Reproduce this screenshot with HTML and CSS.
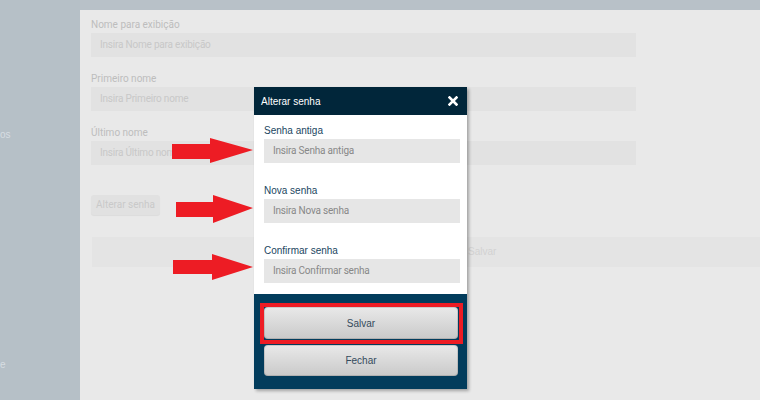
FILE: index.html
```html
<!DOCTYPE html>
<html>
<head>
    <meta charset="utf-8" />
    <title>Alterar senha</title>
    <link rel="stylesheet" href="styles.css">
</head>
<body>
    <div id="pagina">
        <div id="menu">
            <div class="menu-item item1">os</div>
            <div class="menu-item item2">e</div>
        </div>
        <div id="direita">
            <div id="topo"></div>
            <div id="conteudo">
                <div class="grupo">
                    <div class="rotulo">Nome para exibição</div>
                    <div class="campo">Insira Nome para exibição</div>
                </div>
                <div class="grupo">
                    <div class="rotulo">Primeiro nome</div>
                    <div class="campo">Insira Primeiro nome</div>
                </div>
                <div class="grupo">
                    <div class="rotulo">Último nome</div>
                    <div class="campo">Insira Último nome</div>
                </div>
                <div id="botao_senha">Alterar senha</div>
                <div id="barra_salvar">Salvar</div>
            </div>
        </div>
    </div>

    <!-- janela modal -->
    <div id="modal">
        <div id="modal_topo">
            <span>Alterar senha</span>
            <svg width="10" height="10" viewBox="0 0 10 10">
                <path d="M1.5 1.5 L8.5 8.5 M8.5 1.5 L1.5 8.5" stroke="#fff" stroke-width="2.6" stroke-linecap="square" />
            </svg>
        </div>
        <div id="modal_corpo">
            <div class="m-grupo">
                <div class="m-rotulo">Senha antiga</div>
                <div class="m-campo">Insira Senha antiga</div>
            </div>
            <div class="m-grupo">
                <div class="m-rotulo">Nova senha</div>
                <div class="m-campo">Insira Nova senha</div>
            </div>
            <div class="m-grupo">
                <div class="m-rotulo">Confirmar senha</div>
                <div class="m-campo">Insira Confirmar senha</div>
            </div>
        </div>
        <div id="modal_rodape">
            <div class="moldura">
                <div class="m-botao salvar">Salvar</div>
            </div>
            <div class="m-botao fechar">Fechar</div>
        </div>
    </div>

    <!-- setas vermelhas -->
    <svg id="setas" width="760" height="400" viewBox="0 0 760 400">
        <polygon fill="#ed1c24" points="172,144 210,144 210,138 253,150 210,163 210,159 172,159" />
        <polygon fill="#ed1c24" points="176,202 213,202 213,195 253,208 213,223 213,217 176,217" />
        <polygon fill="#ed1c24" points="173,260 212,260 212,254 253,267 212,280 212,274 173,274" />
    </svg>
</body>
</html>
```

FILE: styles.css
```css
html, body {
    margin: 0;
    height: 100%;
    overflow: hidden;
    font-family: 'Liberation Sans', Arial, sans-serif;
    font-size: 10px;
}

#pagina {
    display: flex;
    height: 100%;
}

#menu {
    width: 80px;
    flex-shrink: 0;
    background-color: #b6c0c7;
    color: #d6dde2;
    font-size: 10px;
}

.menu-item {
    line-height: 12px;
}

.item1 {
    padding-top: 129px;
}

.item2 {
    padding-top: 218px;
}

#direita {
    flex-grow: 1;
    display: flex;
    flex-direction: column;
    min-width: 0;
}

#topo {
    height: 10px;
    background-color: #b8c1c8;
}

#conteudo {
    flex-grow: 1;
    background-color: #e9e9e9;
    padding: 9px 0 0 11px;
    font-family: Roboto, 'Liberation Sans', sans-serif;
}

.grupo {
    margin-bottom: 16px;
}

.rotulo {
    line-height: 12px;
    margin-bottom: 2px;
    color: #bdbdbd;
}

.campo {
    width: 536px;
    height: 24px;
    line-height: 24px;
    padding-left: 9px;
    background-color: #e2e2e2;
    color: #c8c8c8;
    letter-spacing: -0.2px;
}

#botao_senha {
    margin-top: 30px;
    width: 69px;
    height: 20px;
    line-height: 20px;
    text-align: center;
    background-color: #e1e1e1;
    border-radius: 3px;
    color: #c9c9c9;
    box-shadow: 0 1px 1px rgba(0,0,0,0.06);
}

#barra_salvar {
    margin-top: 22px;
    margin-left: 1px;
    height: 30px;
    line-height: 30px;
    padding-left: 376px;
    background-color: #e4e4e4;
    color: #d2d2d2;
    font-family: 'Liberation Sans', Arial, sans-serif;
}

#modal {
    position: absolute;
    left: 254px;
    top: 87px;
    width: 213px;
    box-shadow: 2px 2px 3px rgba(0,0,0,0.3);
}

#modal_topo {
    height: 28px;
    background-color: #01263a;
    color: white;
    display: flex;
    align-items: center;
    justify-content: space-between;
    padding: 0 9px 0 7px;
}

#modal_topo svg {
    display: block;
}

#modal_corpo {
    background-color: white;
    padding: 10px 7px 11px 10px;
}

.m-grupo {
    margin-bottom: 22px;
}

.m-grupo:last-child {
    margin-bottom: 0;
}

.m-rotulo {
    line-height: 12px;
    margin-bottom: 2px;
    color: #21465f;
}

.m-campo {
    height: 24px;
    line-height: 24px;
    padding-left: 9px;
    background-color: #e6e6e6;
    color: #888888;
    font-family: Roboto, 'Liberation Sans', sans-serif;
    letter-spacing: -0.2px;
}

#modal_rodape {
    background-color: #023c5c;
    padding: 9px 4px 13px 6px;
}

.moldura {
    border: 4px solid #ed1c24;
    padding: 0 1px 1px 0;
}

.m-botao {
    display: flex;
    align-items: center;
    justify-content: center;
    border-radius: 4px;
    background: linear-gradient(#e9e9e9, #c9c9c9);
    color: #344a5c;
    box-shadow: inset 0 0 0 1px rgba(0,0,0,0.12);
}

.salvar {
    height: 32px;
}

.fechar {
    height: 31px;
    margin: 1px 5px 0 4px;
}

#setas {
    position: absolute;
    left: 0;
    top: 0;
}
```
